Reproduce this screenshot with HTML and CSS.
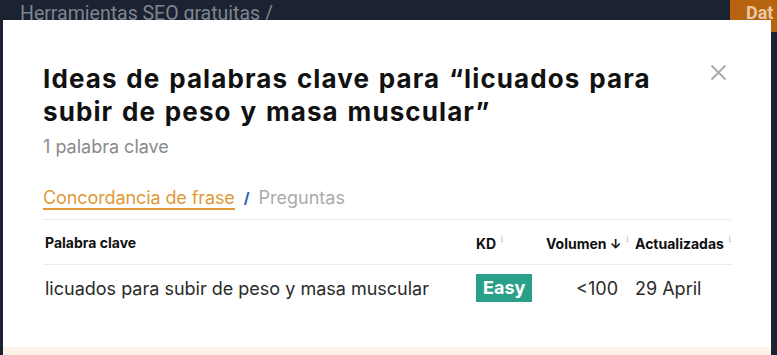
FILE: index.html
```html
<!DOCTYPE html>
<html lang="es">
<head>
<meta charset="utf-8">
<link rel="stylesheet" href="styles.css">
</head>
<body>
<div class="page">
  <div class="topbar">
    <span class="crumb">Herramientas SEO gratuitas /</span>
    <span class="cta">Dat</span>
  </div>
</div>
<div class="modal">
  <div class="modal-body">
    <div class="head">
      <h1 class="title">Ideas de palabras clave para “licuados para subir de peso y masa muscular”</h1>
      <button class="close" aria-label="Cerrar">
        <svg width="17" height="17" viewBox="0 0 17 17"><path d="M1.5 1.5L15.5 15.5M15.5 1.5L1.5 15.5" stroke="#ababab" stroke-width="2" fill="none"/></svg>
      </button>
    </div>
    <div class="count">1 palabra clave</div>
    <div class="tabs">
      <span class="tab active">Concordancia de frase</span>
      <span class="sep">/</span>
      <span class="tab">Preguntas</span>
    </div>
    <table class="kw">
      <thead>
        <tr>
          <th class="c-kw">Palabra clave</th>
          <th class="c-kd">KD<sup>i</sup></th>
          <th class="c-vol">Volumen <span class="arrow">↓</span><sup>i</sup></th>
          <th class="c-upd">Actualizadas<sup>i</sup></th>
        </tr>
      </thead>
      <tbody>
        <tr>
          <td class="c-kw">licuados para subir de peso y masa muscular</td>
          <td class="c-kd"><span class="badge">Easy</span></td>
          <td class="c-vol num">&lt;100</td>
          <td class="c-upd">29 April</td>
        </tr>
      </tbody>
    </table>
  </div>
  <div class="modal-foot"></div>
</div>
</body>
</html>
```

FILE: styles.css
```css
html, body {
  margin: 0;
  padding: 0;
}
body {
  width: 777px;
  height: 355px;
  overflow: hidden;
  background: #1b2231;
  font-family: Inter, "Noto Sans", sans-serif;
  position: relative;
}
.topbar {
  display: flex;
  justify-content: space-between;
  align-items: flex-start;
  height: 34px;
}
.crumb {
  margin: 4px 0 0 20px;
  color: #7f858f;
  font-family: Roboto, sans-serif;
  font-size: 19.5px;
  line-height: 20px;
  white-space: nowrap;
}
.cta {
  width: 47px;
  height: 32px;
  background: #b8630f;
  color: #e8c9a6;
  font-family: Roboto, sans-serif;
  font-weight: 700;
  font-size: 18px;
  line-height: 26px;
  padding-left: 16px;
  box-sizing: border-box;
  overflow: hidden;
}
.modal {
  position: absolute;
  left: 3px;
  top: 20px;
  width: 768px;
  height: 345px;
  background: #fff;
  display: flex;
  flex-direction: column;
}
.modal-body {
  flex: 1;
  padding: 42px 40px 0 40px;
}
.modal-foot {
  height: 18px;
  background: #fdf2e8;
}
.head {
  display: flex;
  justify-content: space-between;
  align-items: flex-start;
}
.title {
  margin: 0;
  width: 640px;
  font-size: 26px;
  line-height: 33px;
  font-weight: 700;
  color: #111;
  letter-spacing: 1.1px;
  word-spacing: 1.5px;
}
.close {
  border: 0;
  background: none;
  padding: 0;
  margin: 2px 4px 0 0;
  width: 17px;
  height: 17px;
  display: block;
}
.count {
  margin-top: 8px;
  font-size: 18px;
  line-height: 22px;
  color: #8a8a8a;
}
.tabs {
  margin-top: 29px;
  display: flex;
  align-items: flex-start;
  font-size: 18px;
  line-height: 21px;
  padding-bottom: 9px;
  border-bottom: 1px solid #ececec;
  width: 688px;
}
.tab {
  color: #aaa;
}
.tab.active {
  color: #e09a35;
  border-bottom: 2px solid #e09a35;
  letter-spacing: -0.1px;
}
.sep {
  color: #2a5db0;
  font-weight: 700;
  font-size: 15px;
  margin: 0 9px 0 9px;
}
.kw {
  border-collapse: collapse;
  table-layout: fixed;
  width: 688px;
}
.kw th {
  font-size: 14px;
  font-weight: 700;
  color: #111;
  text-align: left;
  height: 44px;
  padding: 0;
  border-bottom: 1px solid #ececec;
  white-space: nowrap;
}
.kw td {
  font-size: 18px;
  color: #2a2a2a;
  height: 46px;
  padding: 0;
  white-space: nowrap;
}
.kw sup {
  font-family: "DejaVu Serif", serif;
  font-size: 10px;
  font-weight: 400;
  color: #c4c4c4;
  margin-left: 4px;
  vertical-align: 7px;
}
.c-kw { padding-left: 2px !important; width: 431px; }
.c-kd { width: 70px; }
.c-vol { width: 89px; }
.c-upd { width: 98px; }
.num { text-align: right; padding-right: 17px !important; }
.arrow { font-size: 13px; }
.badge {
  display: inline-block;
  background: #2aa089;
  color: #fff;
  font-weight: 700;
  font-size: 18px;
  line-height: 28px;
  padding: 0 7px;
}
```
